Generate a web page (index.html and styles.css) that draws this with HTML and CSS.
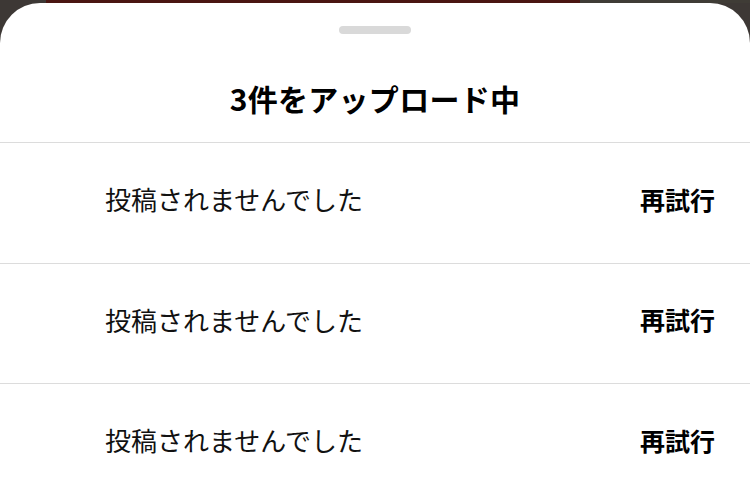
FILE: index.html
```html
<!DOCTYPE html>
<html>
<head>
<meta name="viewport" content="width=device-width, initial-scale=1">
<link rel="stylesheet" href="styles.css">
</head>
<body>

<div class="backdrop"></div>
<div class="sheet">
  <div class="handle"></div>
  <h2 class="title">3件をアップロード中</h2>
  <div class="row">
    <span class="msg">投稿されませんでした</span>
    <button class="retry">再試行</button>
  </div>
  <div class="row">
    <span class="msg">投稿されませんでした</span>
    <button class="retry">再試行</button>
  </div>
  <div class="row">
    <span class="msg">投稿されませんでした</span>
    <button class="retry">再試行</button>
  </div>
</div>

</body>
</html>
```

FILE: styles.css
```css
html, body {
  margin: 0;
  height: 100%;
  overflow: hidden;
}

body {
  background-color: #3d3835;
  font-family: "Noto Sans CJK JP", "Noto Sans", sans-serif;
  color: #111;
}

.backdrop {
  height: 3px;
  background: linear-gradient(to right, #3d3835 0, #3d3835 46px, #4a1612 46px, #4a1612 580px, #3f3c36 580px);
}

.sheet {
  background-color: #fff;
  border-radius: 40px 40px 0 0;
  height: 498px;
  padding-top: 23px;
  box-sizing: border-box;
}

.handle {
  width: 72px;
  height: 8px;
  margin: 0 auto;
  border-radius: 4px;
  background-color: #d9d9d9;
}

.title {
  margin: 34px 0 14px 0;
  height: 60px;
  line-height: 60px;
  text-align: center;
  font-size: 30px;
  font-weight: bold;
  letter-spacing: 0.3px;
  color: #000;
}

.row {
  display: flex;
  align-items: center;
  justify-content: space-between;
  box-sizing: border-box;
  height: 120.5px;
  padding: 0 35px 8px 105px;
  border-top: 1px solid #dcdcdc;
}

.msg {
  font-size: 26px;
  font-weight: normal;
}

.retry {
  background: none;
  border: none;
  padding: 0;
  font-family: inherit;
  font-size: 25px;
  font-weight: bold;
  color: #000;
  cursor: pointer;
}
```
